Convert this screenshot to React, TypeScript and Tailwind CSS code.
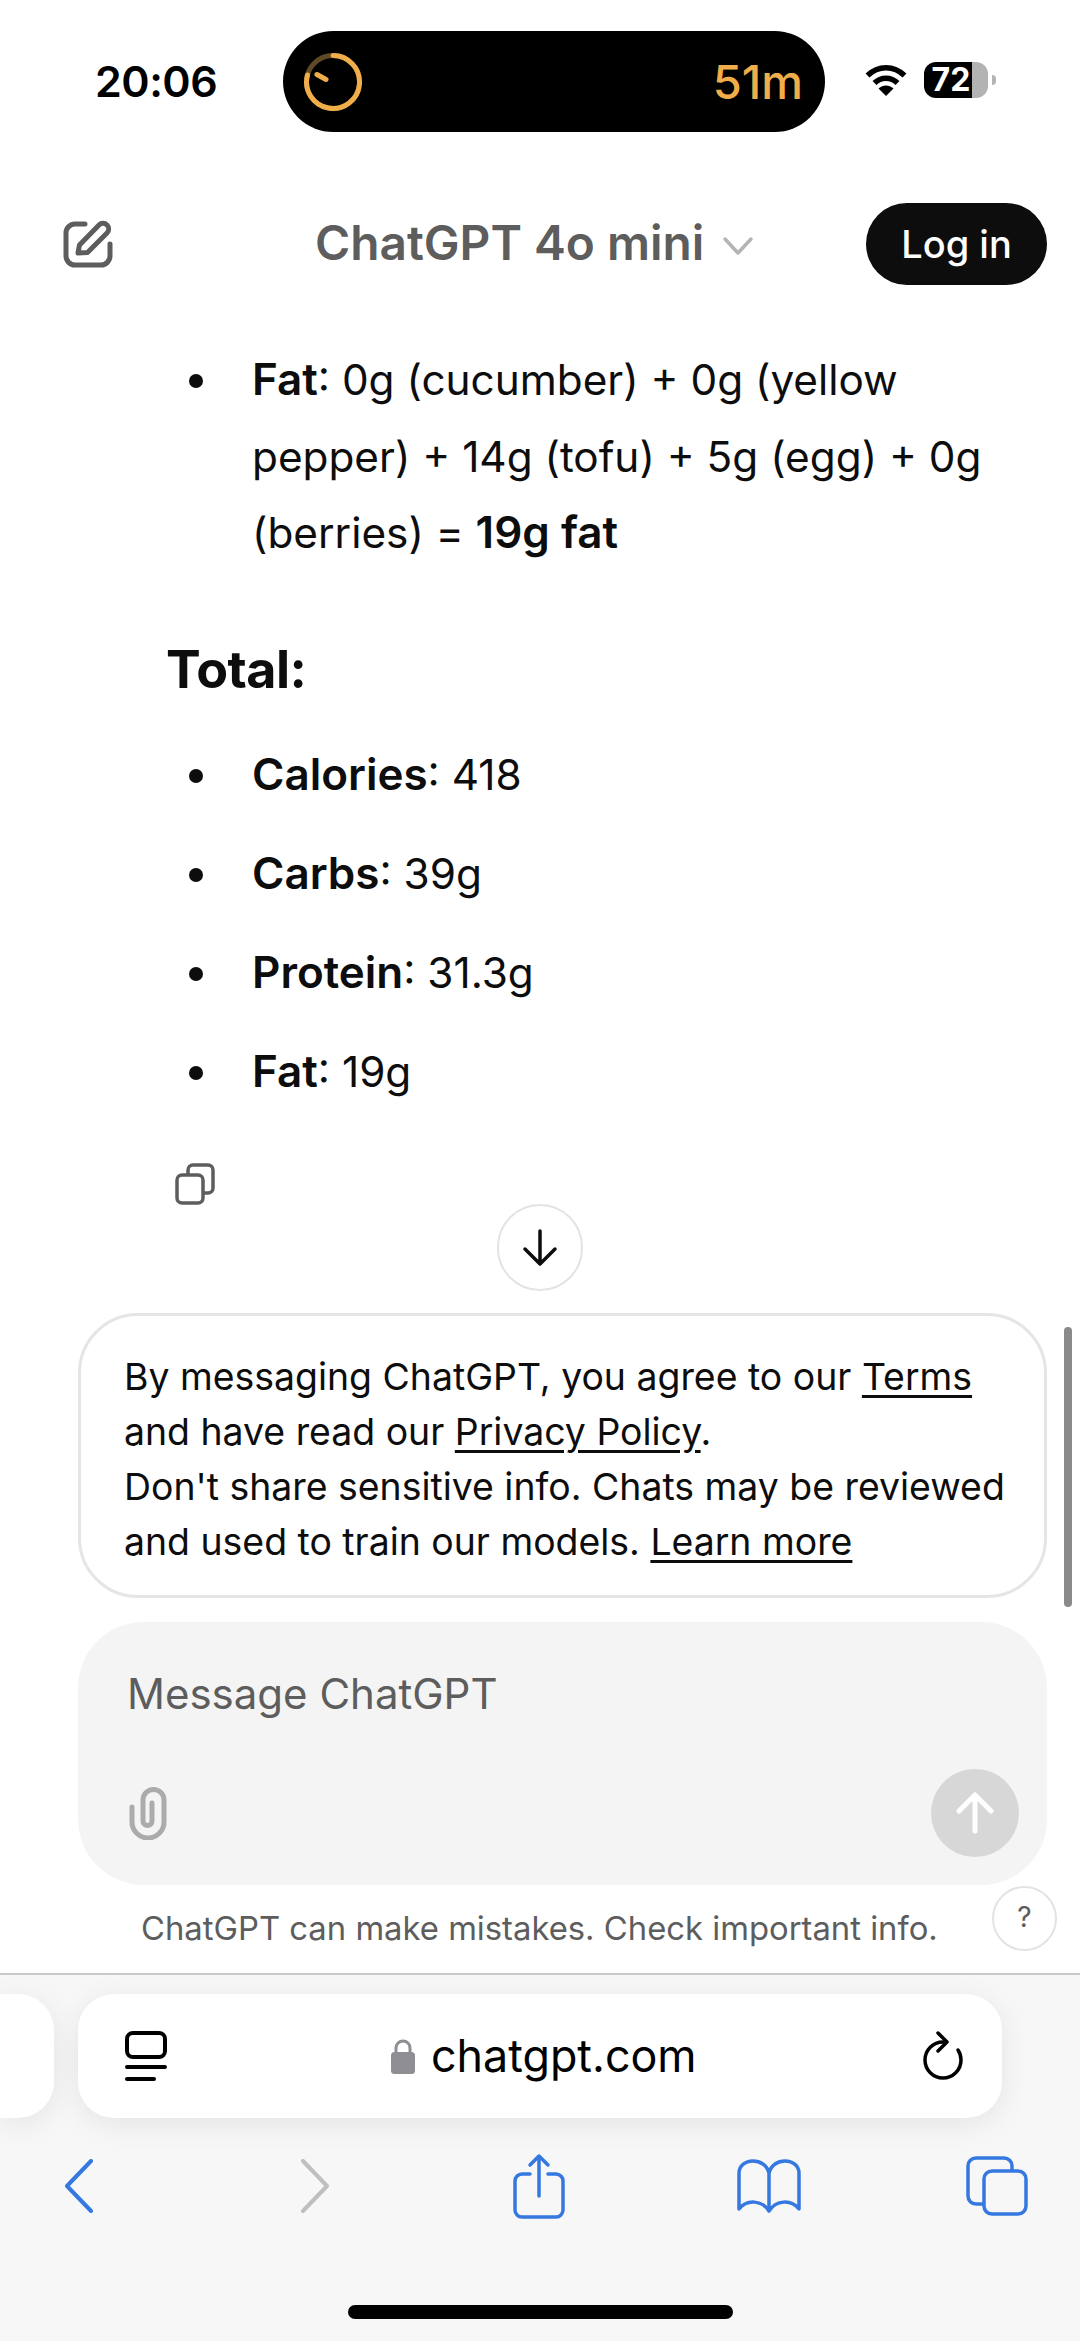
import React from "react";

const totals = [
  { name: "Calories", value: "418" },
  { name: "Carbs", value: "39g" },
  { name: "Protein", value: "31.3g" },
  { name: "Fat", value: "19g" },
];

const Bullet = () => (
  <span className="mt-[32px] mr-[49px] ml-[-1px] h-[14px] w-[14px] shrink-0 rounded-full bg-[#0d0d0d]" />
);

const StatusBar = () => (
  <div className="flex h-[203px] shrink-0 items-start pt-[31px]">
    <span className="ml-[95px] mt-[23px] w-[123px] text-[43px] leading-[54px] font-semibold tracking-[-0.5px] text-black">20:06</span>
    {/* Dynamic island with timer */}
    <div className="ml-[65px] flex h-[101px] w-[542px] items-center justify-between rounded-full bg-black pl-[20px] pr-[22px]">
      <svg width="60" height="60" viewBox="0 0 60 60" fill="none" strokeWidth="5" strokeLinecap="round">
        <circle cx="30" cy="30" r="26.5" stroke="#5e4a26" />
        <path d="M30 3.500A26.500 26.500 0 1 1 4.500 23" stroke="#f0ae4b" />
        <path d="M14 22.500L23 27.500" stroke="#f0ae4b" />
      </svg>
      <span className="text-[47px] leading-none font-medium text-[#f0ae4b]">51m</span>
    </div>
    <svg className="ml-[39px] mt-[33px]" width="44" height="32" viewBox="0 0 42 32" fill="none" stroke="#000" strokeWidth="5.500">
      <path d="M2.500 11.500C13 1 29 1 39.500 11.500" />
      <path d="M9.500 19C16 12.500 26 12.500 32.500 19" />
      <path d="M21 32L13.500 24.500C18 20.500 24 20.500 28.500 24.500Z" fill="#000" stroke="none" />
    </svg>
    <div className="ml-[16px] mt-[31px] flex h-[36px] w-[64px] items-center justify-center rounded-[12px] bg-[linear-gradient(90deg,#000_75%,#b3b3b3_75%)] pr-[10px] text-[32px] leading-none font-bold text-white">
      72
    </div>
    <div className="ml-[4px] mt-[44px] h-[10px] w-[4px] rounded-r-full bg-[#b3b3b3]" />
  </div>
);

const Header = () => (
  <header className="flex h-[82px] shrink-0 items-center pr-[33px] pl-[63px]">
    <svg width="50" height="50" viewBox="0 0 50 50" fill="none" stroke="#5d5d5d" strokeWidth="5" strokeLinecap="round" strokeLinejoin="round">
      <path d="M22 5H12a9 9 0 0 0-9 9V37a9 9 0 0 0 9 9H38a9 9 0 0 0 9-9V25" />
      <path d="M15 34L16.500 26L36 6a5.500 5.500 0 0 1 8 8L24.500 33.500Z" />
    </svg>
    <span className="ml-[202px] text-[47.800px] leading-none font-semibold text-[#5d5d5d]">ChatGPT 4o mini</span>
    <svg className="ml-[18px] mt-[4px]" width="32" height="20" viewBox="0 0 32 20" fill="none" stroke="#b4b4b4" strokeWidth="3.500" strokeLinecap="round" strokeLinejoin="round">
      <path d="M3 3L16 17L29 3" />
    </svg>
    <button className="ml-auto h-[82px] w-[181px] rounded-full bg-[#0d0d0d] text-[38px] font-medium text-white">Log in</button>
  </header>
);

const Answer = () => (
  <main className="relative h-[1028px] shrink-0 text-[42.300px] leading-[76.500px] text-[#0d0d0d]">
    <ul className="flex flex-col pl-[190px] pr-[60px] pt-[57px]">
      <li className="flex">
        <Bullet />
        <p>
          <strong className="text-[44px] leading-none font-semibold">Fat</strong>: 0g (cucumber) + 0g (yellow pepper) +
          14g (tofu) + 5g (egg) + 0g (berries) = <strong className="text-[44px] leading-none font-semibold">19g fat</strong>
        </p>
      </li>
    </ul>
    <h3 className="mt-[60px] ml-[166px] text-[52px] leading-[76.500px] font-bold tracking-[-0.5px]">Total:</h3>
    <ul className="mt-[29px] flex flex-col gap-[22.500px] pl-[190px]">
      {totals.map((item) => (
        <li key={item.name} className="flex">
          <Bullet />
          <p>
            <strong className="text-[44px] leading-none font-semibold">{item.name}</strong>: {item.value}
          </p>
        </li>
      ))}
    </ul>
    <svg className="mt-[52px] ml-[175px]" width="40" height="42" viewBox="0 0 40 42" fill="none" stroke="#5d5d5d" strokeWidth="3.500">
      <rect x="2" y="12" width="26" height="28" rx="5" />
      <path d="M13 12V7a5 5 0 0 1 5-5H33a5 5 0 0 1 5 5V25a5 5 0 0 1-5 5H28" />
    </svg>
    {/* Scroll to bottom button */}
    <div className="absolute top-[919px] left-[497px] flex h-[87px] w-[86px] items-center justify-center rounded-full border-2 border-[#e3e3e3] bg-white">
      <svg width="36" height="38" viewBox="0 0 36 38" fill="none" stroke="#0d0d0d" strokeWidth="3.500" strokeLinecap="round" strokeLinejoin="round">
        <path d="M18 2V35M3 20L18 35L33 20" />
      </svg>
    </div>
  </main>
);

const Notice = () => (
  <div className="mx-[78px] h-[285px] w-[969px] shrink-0 rounded-[60px] border-[3px] border-[#e5e5e5] pt-[33px] pl-[43px] text-[37.400px] leading-[55px] text-[#0d0d0d]">
    By messaging ChatGPT, you agree to our <a className="underline underline-offset-[5px]">Terms</a>
    <br />
    and have read our <a className="underline underline-offset-[5px]">Privacy Policy</a>.
    <br />
    Don't share sensitive info. Chats may be reviewed
    <br />
    and used to train our models. <a className="underline underline-offset-[5px]">Learn more</a>
  </div>
);

const Composer = () => (
  <div className="mt-[24px] ml-[78px] flex h-[263px] w-[969px] shrink-0 flex-col rounded-[66px] bg-[#f4f4f4] pt-[47px] pr-[28px] pb-[28px] pl-[49px]">
    <span className="text-[42px] leading-[50px] text-[#5d5d5d]">Message ChatGPT</span>
    <div className="mt-auto flex items-end justify-between">
      <svg className="mb-[17px] ml-[2px]" width="38" height="53" viewBox="0 0 38 53" fill="none" stroke="#ababab" strokeWidth="5" strokeLinecap="round">
        <path d="M3 20V35a16 16 0 0 0 32 0V13a10.500 10.500 0 0 0-21 0V34a4.500 4.500 0 0 0 9 0V16" />
      </svg>
      <div className="flex h-[88px] w-[88px] items-center justify-center rounded-full bg-[#d7d7d7]">
        <svg width="38" height="42" viewBox="0 0 38 42" fill="none" stroke="#fff" strokeWidth="5" strokeLinecap="round" strokeLinejoin="round">
          <path d="M19 39V3M3 19L19 3L35 19" />
        </svg>
      </div>
    </div>
  </div>
);

const Disclaimer = () => (
  <div className="relative h-[88px] shrink-0 pt-[22px] pl-[141px] text-[32.800px] leading-[42px] text-[#5d5d5d]">
    ChatGPT can make mistakes. Check important info.
    <div className="absolute top-[1px] left-[992px] flex h-[65px] w-[65px] items-center justify-center rounded-full border-2 border-[#e3e3e3] bg-white pb-[4px] text-[28px] text-[#5d5d5d]">
      ?
    </div>
  </div>
);

const SafariBar = () => (
  <footer className="flex flex-1 flex-col border-t-2 border-[#c9c9c9] bg-[#f7f7f7]">
    <div className="mt-[19px] flex h-[124px] gap-[24px]">
      <div className="w-[54px] rounded-r-[36px] bg-white shadow-[0_6px_30px_rgba(0,0,0,0.08)]" />
      <div className="flex w-[924px] items-center rounded-[36px] bg-white pr-[39px] pl-[47px] shadow-[0_6px_30px_rgba(0,0,0,0.08)]">
        <svg width="42" height="50" viewBox="0 0 42 50" fill="none" stroke="#000" strokeWidth="4" strokeLinecap="round">
          <rect x="2" y="2" width="38" height="24" rx="6" />
          <path d="M2 36H40M2 48H29" />
        </svg>
        <svg className="ml-[223px]" width="26" height="35" viewBox="0 0 26 35" fill="none">
          <path d="M6 15V9a7 7 0 0 1 14 0V15" stroke="#8e8e93" strokeWidth="3" />
          <rect x="1" y="13" width="24" height="22" rx="3.500" fill="#8e8e93" />
        </svg>
        <span className="ml-[15px] text-[44.800px] leading-none text-black">chatgpt.com</span>
        <svg className="ml-auto" width="40" height="50" viewBox="0 0 40 50" fill="none" stroke="#000" strokeWidth="3.500" strokeLinecap="round" strokeLinejoin="round">
          <path d="M20 11A18 18 0 1 0 38 29C38 25 37 22 35 19" />
          <path d="M15 2L24 11L15 20" />
        </svg>
      </div>
    </div>
    <nav className="mt-[35px] flex items-center">
      <svg className="ml-[64px]" width="30" height="54" viewBox="0 0 30 54" fill="none" stroke="#3478e0" strokeWidth="4" strokeLinecap="round" strokeLinejoin="round">
        <path d="M27 2L3 27L27 52" />
      </svg>
      <svg className="ml-[206px]" width="30" height="54" viewBox="0 0 30 54" fill="none" stroke="#bfbfbf" strokeWidth="4" strokeLinecap="round" strokeLinejoin="round">
        <path d="M3 2L27 27L3 52" />
      </svg>
      <svg className="ml-[183px]" width="52" height="66" viewBox="0 0 52 66" fill="none" stroke="#3478e0" strokeWidth="3.500" strokeLinecap="round" strokeLinejoin="round">
        <path d="M17 21H9a7 7 0 0 0-7 7V57a7 7 0 0 0 7 7H43a7 7 0 0 0 7-7V28a7 7 0 0 0-7-7H35" />
        <path d="M26 43V3M17 12L26 3L35 12" />
      </svg>
      <svg className="ml-[172px]" width="64" height="54" viewBox="0 0 64 54" fill="none" stroke="#3478e0" strokeWidth="3.500" strokeLinejoin="round">
        <path d="M32 14V52M32 14C30 6 23 2 16 2C8 2 2 7 2 14V50C10 40 25 41 32 52C39 41 54 40 62 50V14C62 7 56 2 48 2C41 2 34 6 32 14Z" />
      </svg>
      <svg className="ml-[165px]" width="62" height="60" viewBox="0 0 62 60" fill="none" stroke="#3478e0" strokeWidth="3.500" strokeLinejoin="round">
        <path d="M18 48H10a8 8 0 0 1-8-8V10a8 8 0 0 1 8-8H38a8 8 0 0 1 8 8V15" />
        <rect x="18" y="15" width="42" height="43" rx="8" />
      </svg>
    </nav>
    <div className="mt-auto mb-[22px] ml-[348px] h-[14px] w-[385px] rounded-full bg-black" />
  </footer>
);

export default function App() {
  return (
    <div className="relative flex h-[2341px] w-[1080px] flex-col overflow-hidden bg-white font-['Inter',sans-serif]">
      <StatusBar />
      <Header />
      <Answer />
      <Notice />
      <Composer />
      <Disclaimer />
      <SafariBar />
      {/* Page scrollbar */}
      <div className="absolute top-[1327px] left-[1064px] h-[280px] w-[8px] rounded-full bg-[#8a8a8a]" />
    </div>
  );
}
